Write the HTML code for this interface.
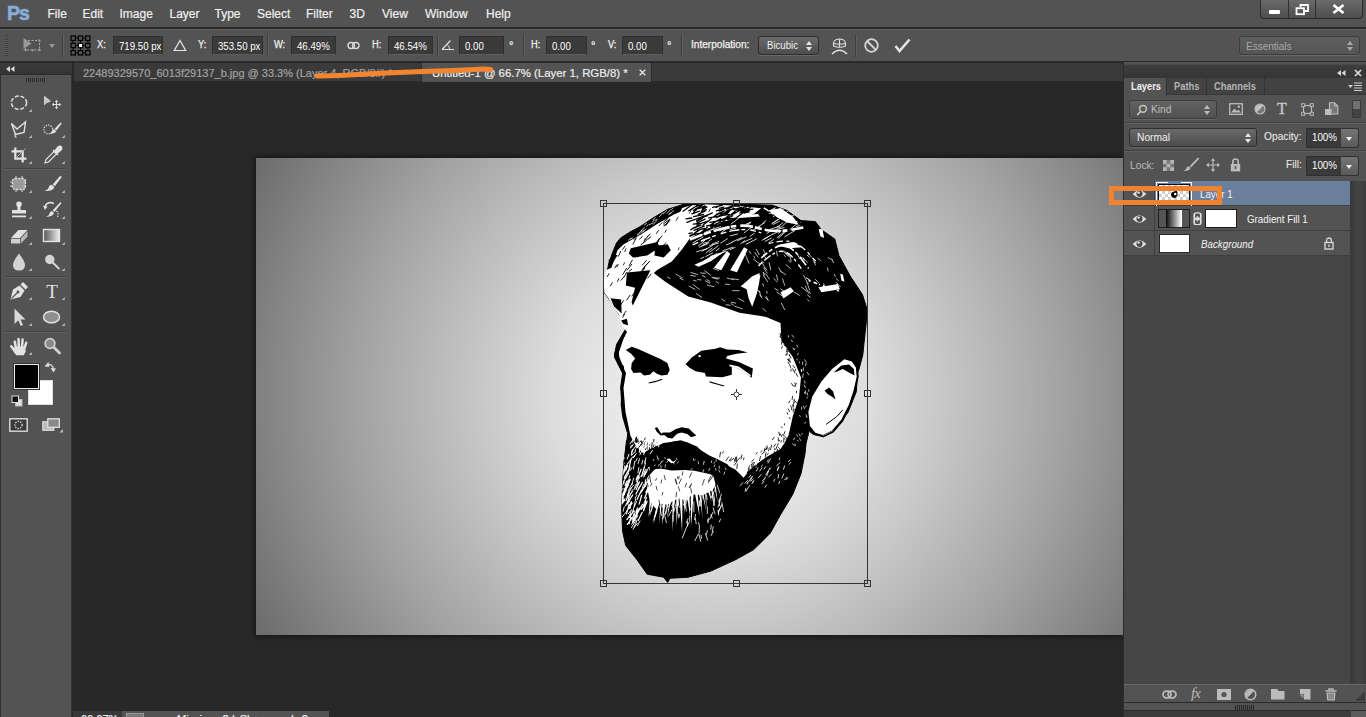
<!DOCTYPE html>
<html>
<head>
<meta charset="utf-8">
<title>Photoshop</title>
<style>
*{box-sizing:border-box;margin:0;padding:0}
html,body{width:1366px;height:717px;overflow:hidden;background:#282828;font-family:"Liberation Sans",sans-serif;color:#e6e6e6;font-size:11px}
.abs{position:absolute}
#menubar{position:absolute;left:0;top:0;width:1366px;height:28px;background:#535353;border-bottom:1px solid #2e2e2e}
#menubar .mi{position:absolute;top:7px;font-size:12px;-webkit-text-stroke:.2px #f0f0f0;color:#f0f0f0;white-space:nowrap}
#pslogo{position:absolute;left:7px;top:1px;font-size:21px;font-weight:bold;color:#86aed8;letter-spacing:-1.2px;transform:scaleX(.93);transform-origin:0 0;-webkit-text-stroke:.6px #86aed8}
#winctl{position:absolute;left:1260px;top:0;width:103px;height:19px;border:1px solid #2a2a2a;border-top:none;border-radius:0 0 4px 4px;background:linear-gradient(#6a6a6a,#4e4e4e);overflow:hidden}
#winctl div{position:absolute;top:0;height:19px;border-right:1px solid #2f2f2f}
#optbar{position:absolute;left:0;top:29px;width:1366px;height:33px;background:#535353;border-top:1px solid #636363;border-bottom:1px solid #2a2a2a}
.ol{position:absolute;top:9px;font-size:10px;-webkit-text-stroke:.25px #f0f0f0;transform:scaleX(.93);transform-origin:0 0;color:#f0f0f0;white-space:nowrap}
.of{position:absolute;top:6px;height:19px;background:#3a3a3a;border:1px solid #303030;border-bottom-color:#5e5e5e;font-size:10.5px;color:#fff;padding:3px 0 0 5px;white-space:nowrap;overflow:hidden}
.sep{position:absolute;top:5px;width:1px;height:22px;background:#3d3d3d;border-right:1px solid #616161;width:2px}
.dd{position:absolute;border:1px solid #2e2e2e;border-radius:3px;background:linear-gradient(#6a6a6a,#4c4c4c);font-size:11px;color:#f0f0f0;white-space:nowrap;box-shadow:0 1px 0 rgba(255,255,255,.12)}
.ud{position:absolute;width:7px;height:11px}
.ud:before{content:"";position:absolute;left:0;top:0;border:3.5px solid transparent;border-top:none;border-bottom:4px solid #e6e6e6}
.ud:after{content:"";position:absolute;left:0;top:6px;border:3.5px solid transparent;border-bottom:none;border-top:4px solid #e6e6e6}
#tabbar{position:absolute;left:74px;top:63px;width:1049px;height:19px;background:#3a3a3a;border-bottom:1px solid #2b2b2b}
.tab{position:absolute;top:0;height:19px;font-size:11px;white-space:nowrap;padding-top:4px;-webkit-text-stroke:.2px currentColor}
#toolhead{position:absolute;left:0;top:63px;width:72px;height:12px;background:linear-gradient(#3b3b3b,#343434);z-index:3;border-bottom:1px solid #2c2c2c}
#toolbox{position:absolute;left:0;top:73px;width:72px;height:644px;background:#535353;border-right:1px solid #333;box-shadow:inset 1px 0 #303030,inset 0 1px #686868}
.ti{position:absolute;overflow:visible}
#tgrip{position:absolute;left:26px;top:5px;width:20px;height:4px;background:repeating-linear-gradient(90deg,#2c2c2c 0 1px,transparent 1px 2px)}
.tsep{position:absolute;left:5px;width:61px;height:2px;background:#444;border-bottom:1px solid #606060}
#rhead{position:absolute;left:1px;top:2px;width:242px;height:14px;background:linear-gradient(#3d3d3d,#353535);border-top:1px solid #4a4a4a}
#rtabs{position:absolute;left:1px;top:16px;width:242px;height:17px;background:#424242;border-bottom:1px solid #383838}
.rt{position:absolute;top:0;height:17px;border-right:1px solid #333;font-size:10px;font-weight:bold;color:#b4b4b4;padding:3px 0 0 7px;white-space:nowrap}
.rt.act{background:#535353;color:#f2f2f2;height:18px}
.rt span,.s{display:inline-block;transform:scaleX(.93);transform-origin:0 0}
.hsep{position:absolute;left:1px;width:242px;height:2px;background:#434343;border-bottom:1px solid #5f5f5f}
.pl{position:absolute;font-size:11px;color:#f0f0f0;white-space:nowrap}
.pf{position:absolute;width:36px;height:20px;background:#3a3a3a;border:1px solid #303030;font-size:10.5px;color:#fff;padding:2px 0 0 5px;white-space:nowrap}
.pb{position:absolute;width:18px;height:20px;background:linear-gradient(#747474,#5a5a5a);border:1px solid #303030;border-left:none;border-radius:0 3px 3px 0}
.pb:after{content:"";position:absolute;left:5px;top:8px;border:3.5px solid transparent;border-top:4px solid #f0f0f0;border-bottom:none}
#llist{position:absolute;left:1px;top:119px;width:226px;height:503px;background:#464646}
.lr{position:absolute;left:0;width:226px;height:25px;background:#535353;border-bottom:1px solid #3f3f3f}
.lr.sel{background:#6a7f9c}
.ec{position:absolute;left:0;top:0;width:31px;height:24px;background:#535353;border-right:1px solid #3f3f3f}
.ln{position:absolute;top:6.8px;font-size:10.5px;color:#f4f4f4;white-space:nowrap}
#rscroll{position:absolute;left:227px;top:119px;width:16px;height:503px;background:linear-gradient(90deg,#393939,#434343 45%,#414141 80%,#383838)}
#rbot{position:absolute;left:1px;top:622px;width:242px;height:19px;background:#535353;border-top:1px solid #686868;border-bottom:1px solid #2c2c2c}
#rgrip{position:absolute;left:1px;top:641px;width:242px;height:8px;background:#535353;border-bottom:1px solid #2c2c2c}
#rfoot{position:absolute;left:1px;top:649px;width:242px;height:7px;background:#3c3c3c}
.s2{display:inline-block;transform:scaleX(.92);transform-origin:0 0}
.tt{display:inline-block;transform-origin:0 0}
#statusbar{position:absolute;left:73px;top:711px;width:256px;height:6px;background:#535353;overflow:hidden}
#orect{position:absolute;left:1109px;top:186px;width:113px;height:19px;border:5px solid #f08232;z-index:10}
#canvas{position:absolute;left:256px;top:158px;width:867px;height:477px;background:radial-gradient(circle at 455px 238px,#f0f0f0 0,#ebebeb 80px,#dcdcdc 160px,#c9c9c9 225px,#a3a3a3 351px,#848484 443px,#707070 500px,#5c5c5c 560px);box-shadow:0 0 6px 1px rgba(0,0,0,.55)}
#rpanel{position:absolute;left:1123px;top:62px;width:243px;height:655px;background:#535353}
</style>
</head>
<body>
<div id="menubar">
 <div id="pslogo">Ps</div>
 <div class="mi" style="left:47.5px">File</div>
 <div class="mi" style="left:82.5px">Edit</div>
 <div class="mi" style="left:119.5px">Image</div>
 <div class="mi" style="left:169.5px">Layer</div>
 <div class="mi" style="left:214.5px">Type</div>
 <div class="mi" style="left:257px">Select</div>
 <div class="mi" style="left:306px">Filter</div>
 <div class="mi" style="left:349.5px">3D</div>
 <div class="mi" style="left:382px">View</div>
 <div class="mi" style="left:425px">Window</div>
 <div class="mi" style="left:486px">Help</div>
 <div id="winctl"><div style="left:0;width:28px"></div><div style="left:28px;width:27px"></div>
<div style="position:absolute;left:8px;top:10px;width:11px;height:4px;background:#fff;border:none;border-radius:1px"></div>
<svg style="position:absolute;left:34px;top:4px" width="14" height="12" viewBox="0 0 14 12"><path d="M5.5 3 V1 H13 V7 H10" fill="none" stroke="#fff" stroke-width="1.8"/><rect x="1.5" y="4.2" width="7.5" height="6" fill="none" stroke="#fff" stroke-width="1.8"/></svg>
<svg style="position:absolute;left:71px;top:4px" width="13" height="10" viewBox="0 0 13 10"><path d="M1.5 1 L11.5 9 M11.5 1 L1.5 9" stroke="#fff" stroke-width="2.6"/></svg>
</div>
</div>
<div id="optbar">
 <div style="position:absolute;left:5px;top:5px;width:3px;height:21px;background:repeating-linear-gradient(#404040 0 1px,#5a5a5a 1px 2px)"></div>
 <svg style="position:absolute;left:22px;top:7px" width="20" height="17" viewBox="0 0 20 17"><path d="M1.5 1 L1.5 12 L9.5 6.5 Z" fill="#9a9a9a"/><path d="M6 3.5 H17.5 V13 H3.5 V10" fill="none" stroke="#a8a8a8" stroke-width="1" stroke-dasharray="2 1.5"/><rect x="2.5" y="12" width="2" height="2" fill="#a0a0a0"/><rect x="9.5" y="12.3" width="2" height="2" fill="#a0a0a0"/><rect x="16.5" y="12" width="2" height="2" fill="#a0a0a0"/><rect x="16.5" y="2.5" width="2" height="2" fill="#a0a0a0"/></svg>
 <div style="position:absolute;left:49px;top:14px;width:0;height:0;border:3.5px solid transparent;border-top:4px solid #9a9a9a"></div>
 <div class="sep" style="left:62px"></div>
 <svg style="position:absolute;left:70px;top:5px" width="21" height="21" viewBox="0 0 21 21"><path d="M3 3 H18 V18 H3 Z M10.5 3 V18 M3 10.5 H18" stroke="#000" stroke-width="1" fill="none"/><g fill="#535353" stroke="#000" stroke-width="1.2"><rect x="1" y="1" width="4.4" height="4.4"/><rect x="8.3" y="1" width="4.4" height="4.4"/><rect x="15.6" y="1" width="4.4" height="4.4"/><rect x="1" y="8.3" width="4.4" height="4.4"/><rect x="15.6" y="8.3" width="4.4" height="4.4"/><rect x="1" y="15.6" width="4.4" height="4.4"/><rect x="8.3" y="15.6" width="4.4" height="4.4"/><rect x="15.6" y="15.6" width="4.4" height="4.4"/></g><rect x="8.3" y="8.3" width="4.4" height="4.4" fill="#fff" stroke="#000" stroke-width="1.2"/></svg>
 <div class="ol" style="left:97px">X:</div>
 <div class="of" style="left:113px;width:50px"><span class="s2">719.50 px</span></div>
 <svg style="position:absolute;left:173px;top:9px" width="14" height="13" viewBox="0 0 14 13"><path d="M7 1.5 L12.7 11.5 H1.3 Z" fill="none" stroke="#e8e8e8" stroke-width="1.2"/></svg>
 <div class="ol" style="left:198px">Y:</div>
 <div class="of" style="left:212px;width:51px"><span class="s2">353.50 px</span></div>
 <div class="sep" style="left:267px"></div>
 <div class="ol" style="left:274px">W:</div>
 <div class="of" style="left:291px;width:45px"><span class="s2">46.49%</span></div>
 <svg style="position:absolute;left:347px;top:11px" width="13" height="9" viewBox="0 0 13 9"><rect x="1" y="1.5" width="6.5" height="6" rx="3" fill="none" stroke="#d8d8d8" stroke-width="1.4"/><rect x="5.5" y="1.5" width="6.5" height="6" rx="3" fill="none" stroke="#d8d8d8" stroke-width="1.4"/></svg>
 <div class="ol" style="left:372px">H:</div>
 <div class="of" style="left:388px;width:45px"><span class="s2">46.54%</span></div>
 <div class="sep" style="left:437px"></div>
 <svg style="position:absolute;left:441px;top:9px" width="14" height="12" viewBox="0 0 14 12"><path d="M1 10.5 H13 M1 10.5 L9.5 1.5" fill="none" stroke="#e0e0e0" stroke-width="1.2"/><path d="M8.5 10.5 A6 6 0 0 0 6.2 5.5" fill="none" stroke="#e0e0e0" stroke-width="1"/></svg>
 <div class="of" style="left:459px;width:45px"><span class="s2">0.00</span></div>
 <div class="ol" style="left:509px;top:9px;font-size:12px">°</div>
 <div class="sep" style="left:523px"></div>
 <div class="ol" style="left:531px">H:</div>
 <div class="of" style="left:546px;width:41px"><span class="s2">0.00</span></div>
 <div class="ol" style="left:591px;top:9px;font-size:12px">°</div>
 <div class="ol" style="left:608px">V:</div>
 <div class="of" style="left:622px;width:41px"><span class="s2">0.00</span></div>
 <div class="ol" style="left:667px;top:9px;font-size:12px">°</div>
 <div class="sep" style="left:681px"></div>
 <div class="ol" style="left:691px;transform:scaleX(1.01)">Interpolation:</div>
 <div class="dd" style="left:758px;top:6px;width:61px;height:19px"><span style="position:absolute;left:8px;top:2.5px;font-size:10px;transform:scaleX(.96);transform-origin:0 0">Bicubic</span><i class="ud" style="right:5px;top:4px"></i></div>
 <svg style="position:absolute;left:830px;top:7px" width="19" height="18" viewBox="0 0 19 18"><path d="M3.5 9 Q2.5 2 9.5 2 Q16.5 2 15.5 9 Q9.5 11.5 3.5 9 Z M9.5 2 V10.2 M3.2 6.3 Q9.5 8.3 15.8 6.3" fill="none" stroke="#e0e0e0" stroke-width="1.1"/><path d="M2 17 Q9.5 9.5 17 17" fill="none" stroke="#e0e0e0" stroke-width="1.5"/></svg>
 <div class="sep" style="left:855px"></div>
 <svg style="position:absolute;left:863px;top:7px" width="17" height="17" viewBox="0 0 17 17"><circle cx="8.5" cy="8.5" r="6.3" fill="none" stroke="#d6d6d6" stroke-width="1.8"/><path d="M4 4 L13 13" stroke="#d6d6d6" stroke-width="1.8"/></svg>
 <svg style="position:absolute;left:894px;top:8px" width="17" height="15" viewBox="0 0 17 15"><path d="M1.5 8 L5.5 13 L15.5 1.5" fill="none" stroke="#e4e4e4" stroke-width="2.6" stroke-linejoin="miter"/></svg>
 <div class="dd" style="left:1239px;top:6px;width:121px;height:19px;color:#a8a8a8;background:linear-gradient(#5e5e5e,#555);border-color:#3d3d3d"><span style="position:absolute;left:6px;top:2.5px;font-size:10.5px;transform:scaleX(.95);transform-origin:0 0">Essentials</span><i class="ud" style="right:5px;top:4px;opacity:.55"></i></div>
</div>
<div id="toolhead"><svg style="position:absolute;left:6px;top:3px" width="9" height="6" viewBox="0 0 9 6"><path d="M4 0 V6 L0 3 Z M8.5 0 V6 L4.5 3 Z" fill="#d8d8d8"/></svg></div>
<div id="toolbox">
<div id="tgrip"></div>
<svg class="ti" style="left:7px;top:18px" width="24" height="24" viewBox="0 0 24 24"><ellipse cx="12" cy="11.7" rx="7.6" ry="6.6" fill="none" stroke="#e2e2e2" stroke-width="1.5" stroke-dasharray="4 1.8"/><path d="M23 19 V22 H20 Z" fill="#bdbdbd" transform="translate(1.8,-1)"/></svg>
<svg class="ti" style="left:40px;top:18px" width="24" height="24" viewBox="0 0 24 24"><path d="M4 4.5 L4 14.5 L6.5 12.2 L11.2 10.3 Z" fill="#c8c8c8"/><path d="M16.5 10 V17 M13 13.5 H20" stroke="#e2e2e2" stroke-width="1.1"/><path d="M16.5 8.8 L18.2 11 H14.8 Z M16.5 18.2 L18.2 16 H14.8 Z M11.8 13.5 L14 11.8 V15.2 Z M21.2 13.5 L19 11.8 V15.2 Z" fill="#e2e2e2"/></svg>
<svg class="ti" style="left:7px;top:44px" width="24" height="24" viewBox="0 0 24 24"><path d="M4.5 6.5 L10 12 L18.5 5 L17 15.5 L8.5 17.5 Z" fill="none" stroke="#e2e2e2" stroke-width="1.4" stroke-linejoin="miter"/><path d="M8.5 17 Q7 19.5 9.5 20.5" fill="none" stroke="#e2e2e2" stroke-width="1.2"/><path d="M23 19 V22 H20 Z" fill="#bdbdbd" transform="translate(1.8,-1)"/></svg>
<svg class="ti" style="left:40px;top:44px" width="24" height="24" viewBox="0 0 24 24"><circle cx="8.3" cy="12.5" r="4.4" fill="none" stroke="#e2e2e2" stroke-width="1.3" stroke-dasharray="1.2 1.3"/><path d="M14.5 12 L20.5 5.5 L21.7 6.6 L16.5 13.5 Z" fill="#e2e2e2"/><path d="M14 12.3 L16.2 14 Q15 17 9.5 16.6 Q12 15.5 12.3 14 Q12.8 12.3 14 12.3 Z" fill="#e2e2e2"/><path d="M23 19 V22 H20 Z" fill="#bdbdbd" transform="translate(1.8,-1)"/></svg>
<svg class="ti" style="left:7px;top:70px" width="24" height="24" viewBox="0 0 24 24"><path d="M8.3 4.5 V15.7 H19.5 M4.5 8.3 H15.7 V19.5" fill="none" stroke="#e2e2e2" stroke-width="2.2"/><path d="M9.5 14.5 L18.5 5.5" stroke="#b0b0b0" stroke-width="1"/><path d="M23 19 V22 H20 Z" fill="#bdbdbd" transform="translate(1.8,-1)"/></svg>
<svg class="ti" style="left:40px;top:70px" width="24" height="24" viewBox="0 0 24 24"><path d="M5 20 L6 16.5 L14 8.5 L16.5 11 L8.5 19 Z" fill="none" stroke="#e2e2e2" stroke-width="1.2"/><path d="M13 7 L18 12 M14.5 8.5 L18 4 Q20 2.5 21.5 4 Q22.5 5.5 21 7 L17 10.5 Z" fill="#e2e2e2" stroke="#e2e2e2" stroke-width="1.3"/><path d="M23 19 V22 H20 Z" fill="#bdbdbd" transform="translate(1.8,-1)"/></svg>
<svg class="ti" style="left:7px;top:99px" width="24" height="24" viewBox="0 0 24 24"><rect x="5.5" y="6.5" width="13" height="11" rx="2.5" fill="#9a9a9a" stroke="#e2e2e2" stroke-width="1.3" stroke-dasharray="2 1.3"/><path d="M9 4 V20 M15 4 V20 M3 10 H21 M3 14 H21" stroke="#e2e2e2" stroke-width="1" stroke-dasharray="2.5 11"/><path d="M23 19 V22 H20 Z" fill="#bdbdbd" transform="translate(1.8,-1)"/></svg>
<svg class="ti" style="left:40px;top:99px" width="24" height="24" viewBox="0 0 24 24"><path d="M20.3 3.8 L21.8 5 L14.8 14.3 L12.6 12.4 Z" fill="#e2e2e2"/><path d="M12 12.9 L14.3 15 Q13.5 19.5 4.5 19 Q8.2 17.8 8.6 15.5 Q9.3 12.6 12 12.9 Z" fill="#e2e2e2"/><path d="M23 19 V22 H20 Z" fill="#bdbdbd" transform="translate(1.8,-1)"/></svg>
<svg class="ti" style="left:7px;top:125px" width="24" height="24" viewBox="0 0 24 24"><path d="M9.5 4.5 Q12 2.5 14.5 4.5 Q15.5 6.5 13.5 9 V12 H19 V15.5 H5 V12 H10.5 V9 Q8.5 6.5 9.5 4.5 Z" fill="#e2e2e2"/><rect x="5" y="17.5" width="14" height="1.8" fill="#e2e2e2"/><path d="M23 19 V22 H20 Z" fill="#bdbdbd" transform="translate(1.8,-1)"/></svg>
<svg class="ti" style="left:40px;top:125px" width="24" height="24" viewBox="0 0 24 24"><path d="M20.5 4 L21.5 5 L14.5 14 L12.8 12.3 Z" fill="#e2e2e2"/><path d="M12.3 13.2 L14 15 Q12.5 19 6 18.7 Q9.5 17.5 9.5 15.3 Q10.3 13 12.3 13.2 Z" fill="#e2e2e2"/><path d="M5 9 Q6 4.5 11 4.5 L14 5.5" fill="none" stroke="#e2e2e2" stroke-width="1.5"/><path d="M3 7.5 L7.5 8.5 L5 12 Z" fill="#e2e2e2"/><path d="M16.5 13 Q19.5 15.5 17 19.5" fill="none" stroke="#e2e2e2" stroke-width="1.2" stroke-dasharray="1.3 1.3"/><path d="M23 19 V22 H20 Z" fill="#bdbdbd" transform="translate(1.8,-1)"/></svg>
<svg class="ti" style="left:7px;top:151px" width="24" height="24" viewBox="0 0 24 24"><path d="M4 14 L11.5 6 H20.5 L13 14 Z" fill="#e2e2e2"/><path d="M4 14.8 H13 V19.5 H4 Z" fill="#d0d0d0"/><path d="M13.8 14.5 L20.5 7.3 V12.5 L13.8 19.5 Z" fill="#b8b8b8"/><path d="M23 19 V22 H20 Z" fill="#bdbdbd" transform="translate(1.8,-1)"/></svg>
<svg class="ti" style="left:40px;top:151px" width="24" height="24" viewBox="0 0 24 24"><defs><linearGradient id="gt" x1="0" x2="1"><stop offset="0" stop-color="#555"/><stop offset="1" stop-color="#f0f0f0"/></linearGradient></defs><rect x="3.5" y="5.5" width="16" height="12" fill="url(#gt)" stroke="#e2e2e2" stroke-width="1.4"/><path d="M23 19 V22 H20 Z" fill="#bdbdbd" transform="translate(1.8,-1)"/></svg>
<svg class="ti" style="left:7px;top:177px" width="24" height="24" viewBox="0 0 24 24"><path d="M12 3.5 Q18 11.5 18 15 Q18 20.5 12 20.5 Q6 20.5 6 15 Q6 11.5 12 3.5 Z" fill="#d4d4d4"/><path d="M23 19 V22 H20 Z" fill="#bdbdbd" transform="translate(1.8,-1)"/></svg>
<svg class="ti" style="left:40px;top:177px" width="24" height="24" viewBox="0 0 24 24"><circle cx="9.8" cy="9.5" r="4.7" fill="#d4d4d4"/><path d="M13 12.7 L18.8 18.5" stroke="#d4d4d4" stroke-width="2" stroke-linecap="round"/><path d="M23 19 V22 H20 Z" fill="#bdbdbd" transform="translate(1.8,-1)"/></svg>
<svg class="ti" style="left:7px;top:206px" width="24" height="24" viewBox="0 0 24 24"><path d="M3.5 20.5 L6 10.5 L12.5 6.5 L17.5 11.5 L13.5 18 Z" fill="#e2e2e2"/><path d="M4.5 19.5 L10.5 13.5" stroke="#535353" stroke-width="1.1"/><circle cx="11" cy="13" r="1.4" fill="#535353"/><path d="M13.5 5.5 L16 3 L21 8 L18.5 10.5 Z" fill="#e2e2e2"/><path d="M23 19 V22 H20 Z" fill="#bdbdbd" transform="translate(1.8,-1)"/></svg>
<svg class="ti" style="left:40px;top:206px" width="24" height="24" viewBox="0 0 24 24"><text x="12" y="18.5" font-family="Liberation Serif" font-size="19" text-anchor="middle" fill="#e2e2e2">T</text><path d="M23 19 V22 H20 Z" fill="#bdbdbd" transform="translate(1.8,-1)"/></svg>
<svg class="ti" style="left:7px;top:232px" width="24" height="24" viewBox="0 0 24 24"><path d="M7.5 3.5 V19 L11.3 15.3 L13.8 21 L16 20 L13.6 14.5 H18.5 Z" fill="#d8d8d8"/><path d="M23 19 V22 H20 Z" fill="#bdbdbd" transform="translate(1.8,-1)"/></svg>
<svg class="ti" style="left:40px;top:232px" width="24" height="24" viewBox="0 0 24 24"><ellipse cx="11.5" cy="12" rx="8" ry="5.8" fill="#8f8f8f" stroke="#e2e2e2" stroke-width="1.5"/><path d="M23 19 V22 H20 Z" fill="#bdbdbd" transform="translate(1.8,-1)"/></svg>
<svg class="ti" style="left:7px;top:261px" width="24" height="24" viewBox="0 0 24 24"><g stroke="#e2e2e2" stroke-width="2.5" stroke-linecap="round" fill="none"><path d="M9.1 14.4 L7.7 7.6 M11.9 13.2 L11.5 5 M15 13.2 L15.6 5.5 M17.4 14.4 L19.2 8.8 M8.4 18 L4.3 12.3"/></g><path d="M7.7 12.5 L18 12.5 L18.7 17.5 L16.7 21.3 L9.1 21.3 L6.5 16.8 Z" fill="#e2e2e2"/><path d="M23 19 V22 H20 Z" fill="#bdbdbd" transform="translate(1.8,-1)"/></svg>
<svg class="ti" style="left:40px;top:261px" width="24" height="24" viewBox="0 0 24 24"><circle cx="10" cy="9.5" r="4.8" fill="#888" stroke="#d0d0d0" stroke-width="1.8"/><path d="M13.8 13.3 L19.5 19" stroke="#d0d0d0" stroke-width="2.8" stroke-linecap="round"/></svg>
<div class="tsep" style="top:95px"></div><div class="tsep" style="top:203px"></div><div class="tsep" style="top:258px"></div>
<svg class="ti" style="left:44px;top:288px" width="13" height="12" viewBox="0 0 13 12"><path d="M3 4 Q8 2 9.5 8" fill="none" stroke="#d8d8d8" stroke-width="1.4"/><path d="M0.5 5.5 L4.5 0.8 L5.2 6 Z M6.5 7 L12 7.5 L9.5 11.5 Z" fill="#d8d8d8"/></svg>
<div style="position:absolute;left:28px;top:307px;width:25px;height:25px;background:#fff;border:1px solid #ddd"></div>
<div style="position:absolute;left:14px;top:291px;width:25px;height:25px;background:#000;border:1px solid #e8e8e8;outline:1px solid #333"></div>
<svg class="ti" style="left:11px;top:322px" width="12" height="12" viewBox="0 0 12 12"><rect x="4.5" y="4.5" width="6.5" height="6.5" fill="#e0e0e0" stroke="#bbb"/><rect x="1" y="1" width="6.5" height="6.5" fill="#111" stroke="#ddd"/></svg>
<svg class="ti" style="left:9px;top:345px" width="19" height="14" viewBox="0 0 19 14"><rect x=".8" y=".8" width="17.4" height="12.4" fill="#3a3a3a" stroke="#dcdcdc" stroke-width="1.4"/><circle cx="9.5" cy="7" r="3.6" fill="none" stroke="#e8e8e8" stroke-width="1.2" stroke-dasharray="1.4 1.2"/></svg>
<svg class="ti" style="left:42px;top:345px" width="22" height="16" viewBox="0 0 22 16"><rect x=".8" y="3.8" width="11" height="8.5" fill="#bbb" stroke="#ddd" stroke-width="1.2"/><rect x="5.8" y=".8" width="11.5" height="8.5" fill="#888" stroke="#e0e0e0" stroke-width="1.3"/><path d="M21 11 V14.5 H17.5 Z" fill="#bdbdbd"/></svg>
</div>
<div id="tabbar">
 <div class="tab" style="left:9px;color:#a2a2a2"><span class="tt">22489329570_6013f29137_b.jpg @ 33.3% (Layer 4, RGB/8#) *</span></div>
 <div class="tab" style="left:347px;width:231px;background:#535353;color:#ececec;padding-left:10px;border-left:1px solid #2e2e2e;border-right:1px solid #2e2e2e"><span class="tt" style="transform:scaleX(1.035)">Untitled-1 @ 66.7% (Layer 1, RGB/8) *</span>
 <svg style="position:absolute;left:217px;top:6px" width="7" height="7" viewBox="0 0 7 7"><path d="M.7 .7 L6.3 6.3 M6.3 .7 L.7 6.3" stroke="#e4e4e4" stroke-width="1.3"/></svg></div>
</div>
<div id="statusbar"><div style="position:absolute;left:0;top:0;width:49px;height:6px;background:#383838"></div><span style="position:absolute;left:8px;top:1.5px;font-size:11px;color:#f4f4f4;-webkit-text-stroke:.2px #fff">66.67%</span><div style="position:absolute;left:53px;top:2px;width:18px;height:6px;background:#7a7a7a;border:1px solid #999"></div><span style="position:absolute;left:104px;top:1.5px;font-size:11px;color:#f4f4f4;white-space:nowrap;-webkit-text-stroke:.2px #fff;word-spacing:2px">Missing: 2d Sharpened: 2 seconds</span></div>
<div id="canvas"></div>
<!--FACE--><svg id="face" style="position:absolute;left:596px;top:196px" width="280" height="394" viewBox="596 196 280 394"><clipPath id="sc"><path d="M604.2 292.3 L606 278 L608.3 265.7 L612 254 L616.5 243 L620.6 238 L630 232 L640 226.7 L653 218 L667.7 209.3 L684 204.2 L706.7 203.8 L739.5 204.2 L772.3 205.2 L786.6 210.3 L801 220.6 L815.3 221.6 L821.5 229.8 L834.8 239 L838.9 255.4 L850.1 275.9 L862.4 294.4 L867.6 310.8 L864 343 L862.8 355 L859 369 L857.5 373.3 L856.3 391.7 L848.1 412.2 L835.8 428.6 L821.5 435.8 L813.3 434.4 L809.2 431 L806.1 443 L805.1 453.2 L801 473.7 L792.8 494.2 L780.5 514.7 L770.2 533.2 L753.8 549.6 L735.4 559.8 L710.8 571.1 L688.2 577.2 L669.8 578.3 L667.7 582.4 L663.6 577.2 L647.2 574.2 L637 559.8 L625.7 545.5 L622.6 531.1 L621.6 508.6 L622.6 484 L623.7 463.5 L626.7 443 L627.8 432.7 L622.6 412.2 L620.6 387.6 L622.6 373.3 L614.4 356.9 L616.5 344.6 L626.7 327.2 L620.6 316.9 L611.4 302.6 Z"/></clipPath>
<path d="M604.2 292.3 L606 278 L608.3 265.7 L612 254 L616.5 243 L620.6 238 L630 232 L640 226.7 L653 218 L667.7 209.3 L684 204.2 L706.7 203.8 L739.5 204.2 L772.3 205.2 L786.6 210.3 L801 220.6 L815.3 221.6 L821.5 229.8 L834.8 239 L838.9 255.4 L850.1 275.9 L862.4 294.4 L867.6 310.8 L864 343 L862.8 355 L859 369 L857.5 373.3 L856.3 391.7 L848.1 412.2 L835.8 428.6 L821.5 435.8 L813.3 434.4 L809.2 431 L806.1 443 L805.1 453.2 L801 473.7 L792.8 494.2 L780.5 514.7 L770.2 533.2 L753.8 549.6 L735.4 559.8 L710.8 571.1 L688.2 577.2 L669.8 578.3 L667.7 582.4 L663.6 577.2 L647.2 574.2 L637 559.8 L625.7 545.5 L622.6 531.1 L621.6 508.6 L622.6 484 L623.7 463.5 L626.7 443 L627.8 432.7 L622.6 412.2 L620.6 387.6 L622.6 373.3 L614.4 356.9 L616.5 344.6 L626.7 327.2 L620.6 316.9 L611.4 302.6 Z" fill="#000" stroke="#000" stroke-width="1" stroke-linejoin="round"/>
<path d="M611.4 267.7 L617.5 250.3 L623.7 244.2 L640.1 234.9 L657.5 223.7 L673.9 214.4 L688.2 208.3 L706.7 205.8 L727.2 208.7 L719.0 214.4 L702.6 222.6 L692.3 234.9 L682.1 249.3 L671.8 261.6 L657.5 269.8 L653.8 272.9 L665.7 282.1 L688.2 296.4 L710.8 302.6 L739.5 312.8 L766.1 316.9 L780.5 323.1 L781.5 340.5 L792.8 356.9 L801 377.4 L798.9 397.9 L792.8 416.3 L788.7 434.8 L784.6 443 L780.5 449.1 L766.1 457.3 L751.8 467.6 L743.6 477.8 L735.4 469.6 L719 461.4 L702.6 451.2 L688.2 443 L678 440.9 L663.6 443 L650 449 L643.1 453.2 L636 446 L630.5 436 L625.5 412 L623.5 388 L626 373 L618 357 L620 345 L627 332 L621.5 325.3 L619 314.7 L613 306.5 L608.4 298.3 L604.3 292.5 L603.7 282 L606 270.2 Z" fill="#fff"/>
<path d="M844.4 359.2 L832.1 369.1 L821.4 381.4 L812.2 396.7 L808.4 412.1 L809.9 425.9 L815.3 432.8 L822.9 435.1 L832.1 430.5 L841.3 419.8 L849.0 404.4 L853.6 390.6 L856.7 376.8 L855.9 367.6 L852.1 361.5 Z" fill="#fff"/>
<path d="M647.2 477.8 L655.4 468.6 L678.0 469.6 L694.4 470.7 L712.8 474.8 L716.9 481.9 L712.8 490.1 L702.6 495.3 L692.3 494.2 L686.2 500.4 L678.0 498.3 L667.7 504.5 L659.5 503.5 L655.4 508.6 L649.7 500.4 L647.2 488.1 Z" fill="#fff"/>
<path d="M625.8 350.0 L631.7 346.7 L638.1 349.1 L648.7 353.7 L660.4 359.0 L667.4 363.1 L669.7 370.1 L667.4 374.8 L661.5 375.4 L656.9 373.7 L653.3 371.3 L649.8 374.8 L644.0 375.4 L640.5 372.5 L633.4 373.1 L631.1 369.0 L631.7 363.1 L635.2 358.4 L631.1 353.7 Z" fill="#000"/>
<path d="M648.7 383.0 L655.7 381.4 L662.1 379.3" stroke="#000" stroke-width="1.1" fill="none"/>
<path d="M685.5 364.3 L692.0 357.3 L701.4 350.8 L715.4 348.8 L720.1 347.3 L727.1 349.6 L738.8 350.0 L747.6 352.6 L736.5 353.7 L727.1 356.1 L726.0 358.4 L738.8 361.9 L752.9 368.4 L751.7 377.8 L744.7 372.5 L736.5 367.8 L731.8 366.6 L731.8 374.8 L722.4 377.2 L706.0 376.6 L704.9 373.1 L695.5 371.3 L689.6 367.8 Z" fill="#000"/>
<path d="M729.5 364.5 L738.8 366.4 L751.1 375.2 L750.0 376.2 L737.7 368.6 L729.5 366.2 Z" fill="#fff"/>
<circle cx="699.6" cy="356.1" r="1.2" fill="#fff"/>
<path d="M709.6 381.9 L717.8 384.2 L724.2 386.0" stroke="#000" stroke-width="1.1" fill="none"/>
<path d="M624.6 335.0 L617.6 344.4 L614.9 353.7 L617.7 360.8 L623.1 366.6 L623.6 373.7 L622.2 384.2 L621.5 405.0 L623.1 417.0 L627.6 432.2" stroke="#000" stroke-width="1.6" fill="none" stroke-linejoin="round"/>
<path d="M624.6 335.0 L621.7 339.7 L617.3 346.7 L614.7 353.7 L617.3 360.2 L622.9 366.0 L624.1 370.1 L621.7 363.1 L619.4 357.3 L618.8 352.6 L621.1 346.1 Z" fill="#000"/>
<path d="M654.8 427.9 L657.2 427.3 L661.3 433.7 L663.0 432.6 L670.1 432.6 L675.9 429.1 L681.8 427.3 L688.8 428.5 L692.9 432.6 L696.4 435.5 L691.1 437.3 L687.6 434.3 L681.8 432.6 L677.1 433.7 L672.4 438.4 L667.7 437.8 L664.2 434.9 L660.7 435.5 L656.6 431.4 Z" fill="#000"/>
<path d="M844.4 358.1 L852.1 360.2 L857.1 367.3 L857.9 376.8 L854.8 390.9 L850.2 405.0 L842.6 420.7 L833.1 431.7 L823.3 436.6 L814.7 434.2 L809.1 426.8" stroke="#000" stroke-width="1.6" fill="none" stroke-linejoin="round"/>
<path d="M833.7 372.5 L841.3 365.5 L849.0 364.5 L853.9 369.1 L854.5 375.6 L849.3 372.8 L842.9 369.1 L837.1 371.6 Z" fill="#000"/>
<path d="M824.5 390.6 L829.1 387.5 L833.1 391.5 L835.5 399.5 L832.1 396.7 L827.5 394.0 Z" fill="#000"/>
<path d="M826.0 424.4 L836.7 416.7 L842.9 409.8" stroke="#000" stroke-width="1" fill="none"/>
<path d="M641.9 464.2 L653.7 450.1 L665.4 444.3 L671.2 441.9 L680.6 440.2 L687.6 442.5 L697.0 446.6 L704.0 453.7 L715.7 458.3 L727.4 464.2 L734.5 473.6 L739.2 485.0 L715.7 485.0 L713.4 475.9 L706.4 471.2 L697.0 470.1 L685.3 470.1 L671.2 470.6 L659.5 468.3 L652.5 470.1 L646.6 475.9 L644.3 485.0 L638.4 485.0 L637.3 473.6 Z" fill="#000"/>
<path d="M626.1 439.6 L632.6 447.8 L636.7 456.0 L641.9 464.2 L638.4 485.0 L623.2 485.0 L623.8 461.9 L625.0 450.1 Z" fill="#000"/>
<path d="M666.5 458.9 L669.5 458.6 L673.0 461.9 L677.1 459.3 L674.2 462.8 L671.2 463.3 Z" fill="#fff"/>
<path d="M682.1 207.9 L690.0 205.5 L704.5 204.2 L733.5 205.5 L761.2 208.2 L753.2 214.5 L742.7 217.1 L729.5 219.8 L716.4 225.0 L703.2 230.6 L690.0 238.5 L684.7 239.5 L687.4 226.4 L678.1 217.1 Z" fill="#fff"/>
<path d="M713.9 267.7 L727.2 250.9 L730.2 253.8 L721.4 270.2 Z" fill="#fff"/>
<path d="M730.2 270.2 L744.0 247.2 L747.7 249.3 L737.0 272.2 Z" fill="#fff"/>
<path d="M694.4 264.7 L710.8 257.5 L727.2 249.7 L710.8 261.2 L698.5 266.7 Z" fill="#fff"/>
<path d="M740.5 286.2 L751.8 278.0 L760.4 274.9 L758.9 284.1 L756.9 293.4 L752.2 306.7 L748.7 298.5 L746.6 289.3 Z" fill="#fff"/>
<path d="M737.4 215.5 L757.9 214.0 L760.0 216.5 L739.5 218.1 Z" fill="#fff"/>
<path d="M768.2 210.3 L780.5 208.3 L792.8 216.5 L798.9 224.7 L786.6 222.6 L776.4 216.5 Z" fill="#fff"/>
<path d="M776.4 245.2 L792.8 242.1 L803.0 247.2 L788.7 248.3 Z" fill="#fff"/>
<path d="M819.0 228.8 L822.5 229.8 L823.9 238.0 L820.4 236.0 Z" fill="#fff"/>
<path d="M780.5 292.3 L790.7 287.2 L793.8 291.3 L783.5 298.5 Z" fill="#fff"/>
<path d="M818.4 287.2 L837.9 284.1 L839.9 289.3 L821.5 292.3 Z" fill="#fff"/>
<path d="M630.8 248.3 L657.5 242.1 L659.5 247.2 L647.2 255.4 L632.9 257.5 L628.8 253.4 Z" fill="#000"/>
<path d="M655.4 246.2 L667.7 244.2 L670.8 250.3 L663.6 257.5 L654.4 255.4 Z" fill="#000"/>
<path d="M626.9 272.6 L650.4 270.2 L638.7 293.7 L632.8 305.4 L631.6 301.9 L635.1 287.8 L625.8 285.5 Z" fill="#000"/>
<path d="M610.5 298.3 L621.1 299.5 L621.7 313.6 L614.1 306.5 Z" fill="#000"/>
<path d="M621.1 320.6 L626.9 318.8 L628.1 325.3 L623.4 324.1 Z" fill="#000"/>
<path d="M608.8 259.7 L615.2 255.0 L617.6 255.0 L611.7 264.4 L608.2 269.1 Z" fill="#000"/><g clip-path="url(#sc)"><path d="M631.6 458.9l-1.7 3.0M637.4 475.6l-1.2 5.9M623.6 480.9l-0.7 3.5M634.4 511.5l-1.0 4.2M640.0 520.9l-2.5 4.8M646.4 469.7l-0.9 3.6M631.1 510.7l-1.7 6.3M640.3 476.1l-1.5 3.0M624.3 463.1l-2.8 4.8M631.3 492.7l-1.9 4.4M644.6 501.6l-1.9 6.2M637.1 515.3l-2.5 4.0M634.2 506.1l-1.5 5.7M623.7 499.2l-3.5 5.4M646.9 471.5l-3.4 5.6M638.7 482.6l-5.0 7.1M635.7 498.8l-1.5 7.1M645.4 469.3l-2.6 6.5M623.2 483.1l-1.0 3.6M624.2 506.9l-1.1 4.4M633.4 515.0l-1.2 5.6M637.8 515.9l-4.6 6.7M630.3 479.5l-2.9 7.8M627.5 465.2l-1.7 5.7M638.9 467.6l-1.0 5.4M632.8 491.2l-4.5 5.6M636.9 495.2l-1.7 2.9M633.5 478.2l-1.5 6.6M624.3 452.3l-1.1 3.8M632.0 451.2l-0.7 3.8M625.4 475.4l-1.5 8.1M639.6 458.7l-1.5 4.8M632.7 456.7l-5.2 7.3M635.5 484.8l-0.8 3.5M632.1 467.7l-2.3 3.3M637.2 458.5l-1.4 2.8M637.2 523.3l-4.2 5.8M629.8 475.7l-2.0 7.4M637.4 507.8l-1.5 4.1M645.3 504.7l-1.8 5.8M632.4 449.4l-0.9 4.6M629.8 501.0l-3.6 4.4M649.1 475.5l-1.2 4.2M628.0 463.0l-4.0 7.4M645.9 484.5l-3.9 6.8M624.9 498.6l-4.7 6.1M643.4 484.3l-2.0 7.5M631.8 509.5l-3.4 4.2M642.7 460.3l-0.9 3.8M626.6 511.5l-4.4 5.4M632.3 489.8l-0.7 3.0M637.2 519.8l-3.2 7.6M645.5 463.5l-1.4 4.5M629.3 492.8l-1.7 5.3M632.4 482.8l-3.9 7.5M634.3 518.6l-2.6 5.6M634.8 461.4l-1.4 7.7M627.4 484.0l-3.3 5.4M631.6 487.5l-3.5 6.9M625.5 490.7l-1.4 4.4M644.0 486.7l-3.4 6.7M647.9 481.6l-2.9 5.3M636.8 501.1l-2.5 5.7M635.8 520.4l-4.3 7.1M648.7 467.3l-3.9 7.7M645.9 457.8l-1.3 5.5M624.6 465.8l-1.5 6.9M626.9 502.9l-1.9 3.3M633.6 485.1l-5.1 6.2M627.1 480.7l-2.2 4.5" stroke="#fff" stroke-width="0.9" fill="none" stroke-linecap="round"/>
<path d="M633.9 440.7l-0.9 1.3M647.1 442.9l-0.0 2.7M649.7 444.2l-0.3 4.9M630.6 439.7l-0.1 4.2M636.7 437.2l-1.7 4.4M647.8 447.7l-0.1 1.7M652.1 442.6l-0.3 4.8M650.1 449.5l-0.3 4.5M643.4 441.0l-2.2 4.2M636.6 437.2l-1.0 2.1M630.7 437.8l-0.1 2.2M638.2 440.4l-1.5 2.0M645.2 438.1l-0.5 1.5M653.8 444.9l-0.5 3.1M656.9 442.8l-1.9 4.0M641.2 444.1l-2.8 4.1M639.3 450.1l-2.2 3.0M641.6 441.2l-0.1 2.0M636.1 437.8l-0.3 4.4M637.1 439.3l-0.8 3.0M632.5 443.0l-1.1 4.7M638.1 441.4l-0.0 2.8M644.2 444.1l-0.6 3.2M630.0 442.2l-0.1 1.6M637.9 439.1l-1.6 2.9M654.4 446.9l-2.7 3.7M641.1 440.8l-1.5 1.3M653.4 446.6l-0.2 4.4M631.8 444.4l-1.9 4.0M651.9 447.6l-0.3 1.6M631.6 441.4l-0.4 4.4M647.3 446.4l-2.0 3.3M645.3 444.6l-0.9 1.5M653.9 439.4l-0.2 2.4M644.9 441.8l-1.6 3.6" stroke="#000" stroke-width="0.9" fill="none" stroke-linecap="round"/>
<path d="M708.8 518.1l-0.7 3.5M659.9 498.0l-1.5 4.9M653.1 498.9l-1.8 7.6M701.6 500.1l-0.6 6.2M685.1 490.6l-1.8 4.0M683.8 498.9l1.6 9.5M664.9 516.2l1.5 6.5M713.0 512.1l-3.3 7.2M683.9 500.7l1.2 5.3M714.5 490.6l-3.5 7.2M719.4 500.0l0.1 5.7M676.8 507.7l0.4 3.3M668.0 498.7l-0.4 4.3M698.1 534.5l-3.1 6.1M705.1 486.7l-1.8 5.9M707.7 519.6l0.3 3.3M685.6 503.0l0.7 8.1M700.1 500.6l-0.8 5.7M661.5 492.9l1.6 9.2M687.5 496.2l-4.3 9.0M683.8 491.7l0.7 3.6M667.2 498.3l-1.4 9.1M707.4 506.8l-0.1 6.7M678.0 502.7l1.4 4.7M688.0 518.8l-1.8 4.1M669.7 497.7l0.0 6.1M717.2 485.2l2.5 7.6M719.0 510.2l-0.5 3.0M713.4 531.3l-2.3 4.2M689.5 521.7l-3.7 7.2M699.4 526.3l-0.3 6.9M699.2 500.8l1.1 4.6M698.5 522.6l0.9 3.4M689.7 516.2l0.0 4.6M672.1 509.5l-3.5 6.6M718.0 510.3l0.7 4.7M687.6 521.3l-0.1 4.8M701.0 535.2l0.5 3.2M675.0 507.3l-1.1 4.3M711.2 524.9l-0.4 4.4M713.0 496.8l1.3 8.2M687.4 494.4l0.9 5.8M659.8 505.8l1.6 9.7M653.0 505.8l-3.9 8.3M721.8 502.2l1.8 9.4M707.2 485.8l-1.3 5.5M677.8 502.3l0.6 3.0M670.4 503.4l-1.8 3.4M713.2 507.9l1.9 6.0M663.5 504.1l-1.3 2.9M708.8 486.2l1.1 3.3M720.9 498.2l-2.8 8.9M675.1 499.1l-3.4 6.5M673.3 499.2l2.8 7.8M720.6 519.1l-1.4 2.8M666.8 510.3l-4.5 8.6M678.8 497.9l-0.2 6.5M721.5 494.1l-2.8 7.7M713.2 526.7l-1.0 5.2M673.5 504.0l-1.2 3.4M655.9 511.6l-1.6 5.9M666.8 507.1l-1.5 7.6M707.3 530.8l-0.9 3.7M714.6 500.2l-0.8 5.6M706.5 495.0l0.6 4.7M693.9 502.0l0.0 9.9M688.3 496.8l-2.6 7.1M685.8 529.3l-3.5 8.7M651.5 500.2l1.0 4.2M721.7 504.6l-2.4 5.6M695.3 518.3l0.9 5.5M659.5 495.3l0.9 7.1M699.7 495.3l1.8 5.0M701.8 494.2l0.3 4.4M711.0 514.3l1.1 3.6M679.5 514.4l-0.8 3.6M680.6 499.7l0.8 9.6M672.9 515.3l0.2 5.9M677.0 494.9l-1.2 4.2M684.7 493.0l2.3 6.5M698.8 534.3l2.0 7.1M677.6 511.9l1.1 4.9M656.9 511.1l-3.4 9.2M721.4 505.5l-3.1 6.6M713.4 492.9l-1.5 4.3M713.7 494.1l0.9 5.7M689.2 505.2l1.1 4.6M705.5 533.6l2.1 6.6M708.1 486.1l-1.4 3.5M695.6 514.4l-1.0 5.0" stroke="#fff" stroke-width="0.8" fill="none" stroke-linecap="round"/>
<path d="M676.5 492.3l-0.4 4.6M678.3 486.7l1.4 4.2M681.3 478.8l-2.2 4.6M679.1 476.6l-0.4 2.4M656.2 486.4l0.9 3.6M691.6 472.8l-2.1 4.7M682.9 471.7l-0.6 3.5M713.5 474.9l-3.1 5.1M711.0 476.0l-2.6 5.1M651.8 483.3l-1.1 2.4M709.7 480.3l-1.2 2.3M661.7 479.9l-0.6 3.2M649.8 476.7l1.0 5.7M659.0 500.2l0.9 4.0M691.6 483.6l-2.3 3.6M691.1 485.0l-1.4 2.7M716.2 492.1l-0.1 5.1M678.0 476.5l-0.9 2.0M704.3 479.5l-1.9 5.6M688.0 495.5l0.0 2.0M649.6 475.4l-1.1 3.6M656.4 478.5l-0.7 2.0M647.4 483.4l0.8 3.3M662.8 492.4l-0.7 2.7M690.7 488.1l1.2 5.6M664.2 475.4l1.1 4.4M675.2 479.9l1.5 4.3M686.4 483.3l-1.2 3.6M664.5 504.8l1.2 3.9M675.5 478.9l1.5 4.9" stroke="#000" stroke-width="0.7" fill="none" stroke-linecap="round"/>
<path d="M692.0 468.5l-0.8 1.1M672.9 461.5l1.2 2.5M718.6 470.0l1.3 2.3M714.9 464.8l-0.9 1.7M664.9 457.5l0.2 1.1M711.7 460.8l-0.5 1.8M719.1 466.0l0.3 2.3M668.2 460.1l-1.4 2.5M715.0 462.0l-1.1 1.3M703.9 469.5l-1.2 2.7M698.1 461.6l0.5 2.2M657.0 455.9l1.0 2.7M676.3 458.2l0.5 1.0M709.9 468.3l-1.1 2.2M649.4 467.4l0.0 2.6M653.4 459.5l0.4 1.0M724.8 471.9l-0.9 2.5M704.0 461.2l0.4 1.1M716.1 459.5l0.1 1.8M645.1 460.6l0.3 2.4M678.6 461.9l-1.5 1.4M725.2 468.0l0.8 1.6M695.0 459.7l-0.7 0.9M722.1 458.8l0.7 1.2M660.9 465.4l0.1 2.7M670.5 459.7l-0.9 1.8M703.6 462.6l-0.1 1.8M663.0 460.7l-1.3 1.5M665.6 464.7l-0.5 2.4M715.7 468.5l0.1 1.7M659.4 464.3l-1.1 1.8M655.3 464.8l-1.0 1.1M661.6 461.5l-1.2 2.4M658.0 458.5l0.3 1.6M693.4 458.6l0.1 1.4" stroke="#fff" stroke-width="0.7" fill="none" stroke-linecap="round"/>
<path d="M745.8 488.5l-0.7 2.8M784.6 465.8l-1.1 3.6M764.0 481.1l-2.0 2.6M778.4 467.0l-1.0 3.5M764.4 479.0l-2.2 2.1M774.8 479.3l-1.0 2.1M787.1 477.2l-2.7 2.8M779.0 466.6l-1.4 3.4M787.6 477.8l-1.4 1.9M765.6 466.7l-1.7 2.4M750.8 475.2l-1.9 2.2M749.4 480.7l-2.5 2.2M745.7 471.8l-2.1 3.4M771.0 474.6l-2.3 2.4M752.4 476.5l-1.8 3.8M747.0 489.4l-0.7 1.5M756.4 464.3l-0.5 2.9M765.4 477.1l-1.0 2.2M753.3 479.0l-2.5 2.3M753.0 481.6l-1.0 2.0M747.5 480.5l-2.5 2.7M768.4 471.3l-1.6 4.6M761.2 474.6l-3.0 3.2M768.3 459.8l-1.0 1.6M790.8 462.4l-1.7 1.8M758.1 467.7l-1.7 3.3M780.0 462.7l-3.3 3.1M743.0 482.7l-3.1 2.9M748.1 482.8l-0.9 1.3M779.8 457.9l-0.5 1.9M753.9 480.5l-0.8 1.9M749.8 485.4l-2.4 3.5M751.6 476.9l-2.1 3.5M766.5 485.1l-1.3 2.1M769.7 468.5l-2.4 3.9M768.3 471.3l-2.6 3.6M762.6 465.1l-1.3 1.2M778.7 474.5l-0.7 3.6M770.9 467.9l-1.2 1.1M783.7 474.0l-1.8 4.1M762.0 467.5l-2.2 3.6M752.5 465.8l-1.6 3.1M790.3 459.7l-2.0 2.1M770.5 458.8l-2.5 4.2M779.8 481.2l-1.0 2.4" stroke="#fff" stroke-width="0.8" fill="none" stroke-linecap="round"/>
<path d="M731.7 457.6l-2.5 3.4M756.7 465.5l-2.8 2.3M753.8 459.2l-2.3 2.8M757.3 452.6l-1.3 1.4M754.6 462.4l-2.2 4.2M736.4 457.2l-1.8 3.4M736.1 459.9l-1.8 2.4M733.9 458.4l-3.6 2.6M737.1 461.4l-2.7 3.8M767.1 445.8l-0.2 2.4M740.2 457.6l-3.3 3.2M749.4 465.8l-1.1 4.0M775.7 443.9l-2.2 3.2M766.0 452.7l-0.7 4.3M751.2 469.7l-2.5 2.2M744.0 457.7l-0.5 2.1M736.1 456.8l-1.4 3.0M765.1 451.4l-3.3 2.6M749.6 468.7l-2.3 4.3M774.2 437.3l-1.7 2.4M728.7 456.8l-2.9 3.9M752.0 464.3l-0.5 2.6M720.5 452.2l-0.8 4.7M768.2 453.4l-1.2 1.6M760.5 456.3l-1.0 4.4M769.3 447.8l-0.7 3.1M767.0 448.1l-0.3 1.5M723.8 451.7l-1.7 1.4M753.5 462.3l-2.5 2.5M761.9 450.7l-1.1 1.3M767.3 447.8l-3.3 3.1M771.6 445.2l-1.1 4.3M736.7 457.9l-0.3 3.3M741.9 454.9l-0.8 3.9M737.4 464.0l-0.6 4.5M778.2 443.5l-0.5 1.8M752.0 468.3l-0.8 3.4M765.0 448.0l-0.8 2.6M748.6 470.8l-1.4 1.9M777.1 446.0l-1.3 3.5" stroke="#000" stroke-width="0.8" fill="none" stroke-linecap="round"/>
<path d="M784.1 344.8l0.9 1.1M793.1 409.1l0.2 2.9M794.1 385.4l1.5 1.5M781.3 426.6l1.1 1.3M792.6 396.3l-0.5 3.2M790.9 405.8l0.7 3.8M789.7 364.9l0.9 2.5M795.5 369.2l-1.1 3.4M783.9 437.8l1.2 1.6M783.4 339.5l-1.1 2.9M794.6 382.8l1.1 1.5M780.4 433.9l1.3 2.8M793.2 405.8l-0.1 1.6M783.7 438.8l0.1 3.4M791.1 369.1l-0.3 2.0M777.5 449.4l-0.5 1.8M789.5 355.0l1.5 3.3M782.6 434.6l0.8 1.3M780.2 333.2l2.2 2.7M781.4 440.7l-0.4 1.4M774.4 456.7l0.3 1.7M781.6 342.4l-0.2 1.8M786.3 353.7l-0.5 1.3M779.8 336.1l2.1 2.9M789.0 358.7l-0.6 2.0M786.9 349.4l2.4 2.8M787.2 349.1l-0.8 2.6M789.5 359.6l0.8 2.9M793.6 408.8l1.3 1.2M774.4 451.6l-0.2 1.2M796.3 383.2l-1.3 2.8M789.2 417.5l0.9 1.5M796.0 373.1l1.6 3.3M778.1 437.8l0.4 3.3M781.5 339.9l1.0 2.2M787.6 359.1l0.7 1.2M793.1 365.4l1.7 2.4M792.7 368.7l0.9 2.5M779.2 440.0l0.6 1.0M791.6 383.4l1.4 2.7M788.3 409.0l1.2 2.4M796.5 391.1l-0.1 1.9M778.4 447.5l1.2 1.1M794.6 400.5l2.4 2.7M780.3 334.3l0.9 3.5M784.6 423.7l-0.2 1.3M794.1 402.6l-1.4 3.3M784.5 436.0l2.5 2.9M788.3 359.6l1.3 1.9M793.1 405.1l0.7 0.8M794.2 399.2l-0.3 3.4M782.3 346.2l-0.7 2.1M774.6 448.7l0.1 1.1M788.1 362.1l1.2 2.2M784.9 431.6l-1.1 3.1M787.0 412.6l0.7 1.7M789.8 400.9l-0.9 1.8M778.8 432.1l1.0 3.5M789.1 354.5l0.5 1.5M787.4 351.5l-0.6 3.8" stroke="#000" stroke-width="0.8" fill="none" stroke-linecap="round"/>
<path d="M793.0 348.0l1.2 1.7M806.1 405.8l-0.6 1.3M799.3 361.8l0.2 1.0M807.4 397.1l-0.5 1.0M799.7 415.4l0.5 1.1M804.6 380.9l0.3 2.2M802.8 361.9l-0.3 2.5M803.7 367.8l-0.6 2.9M797.5 440.3l0.6 0.8M803.6 373.9l-0.7 1.3M798.3 353.2l-0.7 1.6M788.6 335.6l-0.3 1.5M808.8 389.6l-0.0 1.7M804.3 385.1l1.1 2.6M794.7 437.8l-1.0 2.0M803.3 406.1l1.3 2.7M806.0 363.0l-0.5 2.6M796.5 434.6l1.4 1.9M798.8 433.7l1.5 2.3M791.9 335.1l1.9 2.2M802.2 433.5l-0.5 0.9M797.0 358.9l0.3 1.2M796.9 345.2l0.7 1.9M807.2 372.4l1.6 2.5M806.3 416.3l0.6 1.2M791.1 340.2l1.5 1.4M801.5 407.3l0.2 2.1M806.1 414.7l0.5 1.6M794.9 444.0l0.6 1.7M794.7 348.7l-0.5 0.9M799.6 438.6l1.1 1.9M805.3 422.3l-0.4 1.0M801.7 369.5l-0.1 2.1M792.4 443.8l1.9 1.6M805.6 390.9l0.1 3.0M802.9 375.8l-0.2 1.8M801.3 369.3l-0.0 2.1M807.4 393.0l0.3 2.0M804.6 359.7l1.6 2.1M804.4 392.2l0.3 1.1" stroke="#fff" stroke-width="0.7" fill="none" stroke-linecap="round"/>
<path d="M655.1 244.1l4.1 -5.4M659.1 225.7l2.9 -3.0M624.8 251.6l1.2 -2.8M656.6 233.4l1.8 -2.9M663.7 222.1l4.9 -5.2M639.6 239.1l2.7 -2.6M637.5 256.4l3.1 -2.7M636.1 252.1l2.5 -1.9M635.3 257.4l1.3 -2.1M658.9 239.8l3.1 -3.9M640.8 244.9l3.5 -2.9M641.5 271.3l2.9 -4.0M643.9 267.2l4.5 -4.6M654.2 250.6l4.9 -4.5M617.1 266.8l1.0 -2.3M658.7 251.2l2.3 -5.6M656.1 246.2l2.3 -5.7M638.1 252.4l5.7 -3.9M666.0 225.4l2.7 -4.3M643.8 242.3l1.4 -3.6M665.1 232.3l1.1 -2.1M645.4 239.5l2.9 -4.0M648.3 239.0l2.4 -2.1M645.2 241.6l2.6 -3.0M629.2 265.5l3.2 -5.4M640.4 274.0l4.3 -5.9M665.5 220.9l2.0 -2.3M661.6 247.1l4.2 -4.3M664.0 225.5l2.6 -1.9M637.9 257.0l3.6 -6.5M615.0 267.9l1.7 -2.9M648.2 236.1l1.9 -2.2M664.1 225.8l5.9 -5.2M635.8 255.9l2.5 -4.7M657.2 242.9l1.9 -1.9M663.4 224.0l6.4 -4.8M658.5 247.0l2.1 -1.5M642.2 269.6l3.5 -3.9M629.1 271.4l2.6 -2.1M633.6 274.6l1.6 -1.7M632.9 244.2l3.1 -5.7M623.4 264.9l1.2 -2.1M646.3 265.0l3.2 -3.6M618.4 256.3l2.3 -5.0M634.1 239.5l2.1 -2.2M622.8 274.4l3.7 -6.0M666.5 223.7l3.2 -4.1M622.5 249.4l2.6 -3.3M627.2 270.1l4.5 -5.8M642.4 265.1l4.0 -4.7" stroke="#000" stroke-width="0.9" fill="none" stroke-linecap="round"/>
<path d="M678.2 249.8l0.9 -2.0M696.6 224.4l1.2 -1.2M700.4 221.2l2.1 -2.7M708.8 211.7l1.4 -2.7M722.2 208.9l1.9 -1.7M689.5 213.2l1.5 -3.0M706.8 216.7l0.9 -1.6M676.2 220.4l2.0 -3.4" stroke="#000" stroke-width="0.8" fill="none" stroke-linecap="round"/>
<path d="M629.9 295.3l-3.1 4.7M617.3 302.3l-3.0 4.2M624.0 276.7l-3.0 3.6M641.9 275.2l-3.3 4.7M634.9 291.8l-2.9 4.2M651.0 274.1l-3.2 4.0M618.8 278.7l-1.2 2.7M626.0 311.1l-2.6 3.9M626.6 272.5l-2.6 4.6M623.6 300.7l-3.0 4.2M609.0 273.8l-2.1 3.0M635.6 293.0l-1.0 2.7M624.3 314.5l-1.5 2.8M612.3 282.7l-1.9 3.2" stroke="#000" stroke-width="0.9" fill="none" stroke-linecap="round"/>
<path d="M698.2 246.1l7.8 -6.9M710.3 257.5l10.0 -4.6M730.2 235.9l7.3 -1.9M781.2 217.3l2.7 -1.4M704.6 260.6l9.0 -5.0M713.4 227.8l6.1 -5.1M784.9 236.7l9.7 -6.0M693.0 242.8l10.1 -5.8M726.4 244.9l5.8 -2.6M764.0 239.1l8.5 -4.8M771.8 210.2l3.5 -2.3M701.0 240.8l3.1 -1.5M730.0 249.6l5.1 -2.2M773.2 224.4l6.1 -3.0M776.9 227.5l6.0 -4.8M786.7 217.3l4.2 -1.6M718.9 229.5l11.3 -2.8M706.0 225.4l4.6 -1.2M721.6 232.5l4.1 -3.4M730.2 229.6l5.2 -1.3M707.9 258.6l9.2 -5.2M772.6 234.3l8.1 -4.0M772.1 223.5l9.5 -6.0M746.0 224.2l4.9 -2.2M774.3 210.6l7.7 -2.5M715.1 221.8l6.0 -5.2M774.7 230.1l9.4 -2.5M724.0 230.0l5.8 -2.0M705.8 256.5l6.8 -3.5M762.2 240.3l7.0 -4.2M716.1 255.0l10.0 -3.5M701.8 245.4l7.0 -2.6M699.4 247.2l7.9 -3.2M716.0 220.1l3.1 -2.3M777.9 228.2l3.4 -1.4M782.1 226.3l6.3 -5.9M757.7 227.1l6.8 -4.4M709.6 252.2l8.5 -6.3M778.6 238.0l7.4 -6.7M752.5 230.4l7.4 -3.8M710.6 256.3l10.0 -2.3M796.5 226.5l3.5 -0.8M740.0 215.7l8.0 -4.5M766.9 233.4l4.0 -2.5M731.2 223.9l7.7 -5.8M744.4 232.6l7.4 -5.6M707.1 223.0l8.4 -4.1M768.5 243.1l5.1 -3.6M703.2 243.3l5.6 -1.3M778.1 233.5l3.0 -2.5M702.1 251.3l10.4 -5.8M750.0 236.4l4.2 -3.1M769.7 229.5l10.0 -3.4M709.1 240.7l2.6 -1.6M740.7 243.7l4.2 -3.1M790.0 229.5l6.4 -5.3M737.5 240.7l8.6 -3.8M768.8 211.3l5.8 -3.2M712.1 244.2l6.7 -2.7M700.7 258.6l3.2 -1.5M710.8 230.0l9.8 -3.5M709.8 245.5l8.4 -2.3M791.6 222.8l2.5 -2.0M772.6 214.0l9.1 -2.2M706.0 252.9l6.0 -4.7M696.5 251.8l10.8 -3.2M742.8 242.6l9.2 -4.3M747.9 224.4l2.6 -1.6M737.6 215.1l4.5 -1.9M783.3 213.9l4.9 -3.0M773.2 216.5l10.7 -5.0M765.0 241.4l6.3 -3.3M731.7 242.1l10.3 -4.5M705.1 260.4l8.1 -4.6M713.6 224.9l5.0 -3.2M772.1 223.5l5.5 -3.9M722.5 250.9l10.4 -3.7M777.0 237.7l8.0 -6.7M720.8 243.0l6.6 -4.2M746.2 244.2l10.2 -5.2M704.7 232.5l8.5 -3.5M713.1 222.5l6.8 -6.2M708.6 222.7l8.5 -2.1M697.3 235.6l8.9 -2.2M716.1 250.8l3.1 -2.4M719.5 230.9l6.5 -2.7M769.2 213.5l5.9 -1.6M781.4 210.0l4.8 -1.6M762.5 223.7l3.5 -3.2M789.9 217.0l7.6 -3.3" stroke="#fff" stroke-width="0.8" fill="none" stroke-linecap="round"/>
<path d="M807.3 255.3l2.1 1.6M806.4 281.7l1.8 1.6M776.8 292.0l5.4 4.0M765.3 267.9l1.5 2.2M764.9 297.0l3.1 3.0M817.9 258.3l2.6 2.1M778.9 267.8l2.3 4.3M807.5 299.7l1.6 1.4M784.4 250.9l3.8 5.0M749.1 251.1l1.8 2.5M763.2 272.9l1.9 1.4M776.5 274.9l1.2 5.2M746.8 258.2l2.1 5.0M836.2 278.6l2.2 2.0M828.1 257.5l3.0 2.0M834.2 274.3l1.0 2.2M785.9 264.6l4.6 3.9M776.5 251.2l0.9 4.8M806.4 277.9l4.1 2.5M815.4 279.5l3.7 3.3M801.5 287.2l5.4 4.1M827.4 268.0l0.8 3.0M762.8 283.6l0.6 2.4M784.5 252.6l5.0 4.1M780.7 289.1l6.6 3.9M763.4 275.4l4.3 6.3M803.2 257.7l1.0 3.0M762.7 308.2l3.1 3.2M774.7 288.4l3.6 2.2M765.9 273.8l3.3 5.3M753.6 259.4l6.3 4.6M754.8 252.4l3.1 4.6M763.5 254.4l2.4 4.1M781.4 303.2l3.2 6.4M769.2 262.7l1.5 7.1M782.6 278.9l2.1 6.5M806.5 277.8l2.8 2.0M807.0 282.8l2.5 6.9M798.0 255.4l1.5 3.2M763.7 267.9l3.4 5.0M803.5 275.0l3.0 6.1M809.0 291.1l1.4 2.7M763.4 272.3l0.7 3.2M831.8 258.8l1.6 3.8M807.5 295.0l2.7 2.0M761.5 261.1l2.4 1.5M781.1 271.6l4.6 3.1M836.1 282.2l4.2 4.6M784.3 255.0l1.2 1.7M808.8 254.0l5.2 5.8M805.3 286.1l3.3 7.1M759.6 295.0l2.5 2.5M823.7 283.8l2.2 6.9M799.9 256.5l4.5 2.7M813.9 261.5l1.7 1.1M757.3 290.2l2.9 1.7M766.7 291.2l0.4 2.1M773.9 278.5l3.1 3.2M788.6 260.6l2.1 1.4M756.2 249.3l3.0 5.4M766.5 296.7l1.6 3.7M789.9 255.9l1.3 5.2M744.8 253.5l1.8 3.9M813.0 258.6l2.3 6.4M759.1 291.0l2.3 6.3M763.2 249.4l2.4 4.8M753.7 256.1l1.4 2.3M804.5 259.4l3.3 3.1M794.1 292.1l5.4 3.3M762.2 262.8l2.9 5.4" stroke="#fff" stroke-width="0.7" fill="none" stroke-linecap="round"/>
<path d="M680.0 278.3l3.2 1.6M676.2 274.3l6.0 3.6M727.1 278.2l6.2 1.4M704.7 270.7l5.8 4.4M700.5 272.9l5.0 0.4M705.3 280.7l4.5 2.5M702.3 275.5l3.0 1.5M689.1 286.1l5.8 3.2M693.3 284.7l6.1 4.6M713.1 268.6l5.5 1.8M713.1 277.8l6.5 0.3M725.3 284.2l4.4 0.3M667.7 277.2l2.4 1.4M697.7 279.6l3.4 0.3M734.9 306.3l7.3 2.5M711.9 277.2l6.0 2.0M690.7 275.3l4.7 0.9M732.0 278.8l6.4 0.8M690.9 272.5l6.6 2.0M732.6 290.7l6.6 0.0M731.5 302.3l4.1 0.8M693.6 280.3l2.6 0.7M696.4 293.6l5.3 3.8M721.8 299.2l3.0 1.9M716.1 281.6l2.3 1.5M706.7 279.5l3.4 2.2M731.1 303.6l2.3 1.6M738.7 298.7l5.3 2.7M707.4 285.1l6.5 1.6M726.2 304.7l4.0 0.6" stroke="#fff" stroke-width="0.7" fill="none" stroke-linecap="round"/>
<path d="M701.8 207.6l2.8 -1.7M745.1 212.0l2.7 -2.3M740.7 211.0l5.9 -2.9M706.6 225.9l7.1 -1.4M727.4 207.8l9.7 -3.9M723.1 220.8l9.6 -5.1M734.7 211.3l5.4 -3.1M692.0 235.6l6.2 -5.5M716.1 207.4l9.5 -4.2M699.7 229.7l4.8 -1.2M716.4 217.3l10.8 -3.4M698.1 214.6l8.2 -5.0M696.9 223.0l8.2 -3.8M745.0 210.5l7.8 -1.4M726.4 209.1l9.6 -3.5M715.6 224.9l4.6 -3.0M715.3 221.8l3.4 -1.7M700.9 213.0l4.2 -1.9M698.1 224.3l9.3 -2.9M693.3 220.0l11.3 -4.1M701.5 211.0l5.3 -4.0M731.0 214.6l4.0 -3.0M688.8 210.8l6.4 -4.0M696.6 220.7l10.5 -5.4M719.4 211.0l4.0 -1.6M695.5 206.7l11.1 -3.6M714.0 216.3l5.5 -2.9M736.7 217.6l8.5 -6.6M710.1 225.8l6.5 -1.1M716.3 214.4l8.2 -3.5M693.6 216.7l9.9 -2.2M725.6 218.0l3.2 -2.4M720.0 221.2l9.6 -5.5M709.8 222.4l8.6 -1.5M719.8 215.6l7.4 -4.1M744.3 213.1l5.6 -3.2M724.7 213.7l8.9 -5.4M694.8 227.9l3.5 -3.2M693.7 212.0l4.1 -3.5M716.4 210.8l10.3 -3.0M712.6 207.4l9.6 -2.0M691.0 209.8l6.8 -5.0M716.5 217.6l4.2 -2.8M737.9 210.2l3.5 -2.6M686.8 222.4l3.1 -1.0M727.6 219.7l8.2 -1.6M708.8 217.8l10.6 -1.7M693.4 210.2l8.0 -4.5M730.8 215.1l4.7 -2.7M702.8 225.2l8.5 -6.5M720.8 213.6l3.7 -0.6M693.9 230.3l10.3 -4.2M728.5 218.9l3.7 -0.6M743.6 207.7l3.4 -2.2M739.6 213.0l8.5 -2.5M689.8 221.1l4.7 -1.4M733.9 213.7l9.8 -5.6M715.9 223.8l9.5 -2.4M719.5 208.3l4.1 -1.2M740.7 208.7l6.0 -2.2M701.8 232.2l5.4 -4.9M689.0 233.4l3.3 -0.6M718.8 220.3l9.1 -2.8M696.8 208.9l4.0 -1.0M696.8 221.4l3.8 -2.3M744.3 212.8l4.9 -0.9M689.9 235.5l8.9 -2.2M741.0 212.2l9.3 -4.6M694.8 227.7l6.1 -2.6M695.4 208.9l6.7 -3.3M703.3 216.8l9.1 -3.9M728.7 209.8l6.2 -1.2M693.2 224.2l6.4 -0.9M725.4 215.0l3.6 -3.2M691.9 213.9l7.6 -2.8M710.6 224.9l9.9 -6.2M725.9 211.3l3.7 -1.7M686.0 218.8l5.8 -0.8M683.1 211.2l8.4 -6.2M690.1 236.2l9.1 -6.0M722.9 215.3l6.6 -0.9M690.8 229.8l3.6 -2.4M710.9 226.9l11.8 -1.8M733.8 209.7l7.6 -2.3M702.3 209.1l3.5 -2.6" stroke="#000" stroke-width="1.3" fill="none" stroke-linecap="round"/>
<path d="M646.8 226.4l1.3 -1.8M668.7 214.6l2.6 -1.5M669.2 213.9l4.4 -3.1M649.3 224.8l3.9 -2.0M663.2 213.9l3.5 -3.2M671.5 209.6l1.6 -1.6M642.7 232.3l3.5 -3.4M630.5 239.2l2.1 -1.4M644.3 225.1l2.3 -1.8M652.6 221.5l2.2 -1.6M653.0 219.8l2.5 -2.6M667.2 213.3l3.4 -3.8M628.2 240.4l2.7 -2.4M641.7 231.7l2.2 -1.6M659.4 216.7l3.6 -4.1M641.3 230.3l3.2 -2.4M637.7 235.5l4.5 -3.9M655.4 220.3l2.1 -1.2M637.1 234.6l4.5 -4.0M653.0 224.5l3.9 -3.8" stroke="#fff" stroke-width="0.7" fill="none" stroke-linecap="round"/></g><g clip-path="url(#sc)"><path d="M690.0 239.5 Q716.4 229.0 730.8 226.7 Q745.3 224.4 754.5 227.2 Q763.8 230.0 773.0 230.8 Q782.2 231.6 792.8 229.5 L803.3 227.4" stroke="#fff" stroke-width="2.6" fill="none" stroke-dasharray="13 2 7 3 16 2 5 4"/>
<path d="M692.6 244.8 Q717.7 233.6 731.5 230.9 Q745.3 228.3 753.2 230.6 L761.2 232.9" stroke="#fff" stroke-width="1.4" fill="none" stroke-dasharray="6 3 10 2 4 5"/>
<path d="M761.2 258.0 Q774.3 246.1 782.2 245.4 Q790.1 244.8 799.4 256.6 L808.6 268.5" stroke="#fff" stroke-width="1.6" fill="none" stroke-dasharray="8 2 4 3 10 3"/>
<path d="M758.5 265.9 Q771.7 252.7 779.6 251.4 Q787.5 250.1 795.4 260.6 L803.3 271.2" stroke="#fff" stroke-width="1.4" fill="none" stroke-dasharray="5 3 8 2 3 4"/>
<path d="M769.1 243.5 Q784.9 239.5 792.8 242.2 Q800.7 244.8 808.6 253.3 L816.5 261.9" stroke="#fff" stroke-width="1.2" fill="none" stroke-dasharray="4 3 7 3 3 5"/>
<path d="M763.8 207.9 Q774.3 214.5 778.2 217.2 Q782.2 219.8 791.5 221.1 L800.7 222.4" stroke="#fff" stroke-width="1.4" fill="none" stroke-dasharray="5 3 3 3 8 4"/>
<path d="M808.6 280.4 Q821.8 285.7 830.3 288.3 L838.9 290.9" stroke="#fff" stroke-width="1.6" fill="none" stroke-dasharray="2 3 4 2 1 3"/>
<path d="M743.4 284.3 L751.9 276.4 L759.8 273.1 L758.5 281.7 L755.9 290.9 L751.9 294.0 L750.0 287.0 Z" fill="#fff"/>
<path d="M818.9 229.6 L822.4 228.3 L823.7 237.6 L820.5 236.2 Z" fill="#fff"/>
<path d="M840.2 273.8 L842.9 274.4 L844.4 281.7 L841.5 280.4 Z" fill="#fff"/></g><g clip-path="url(#sc)"><path d="M649.7 499.4 L651.9 499.4 L648.6 517.2 Z M653.2 499.4 L655.4 499.4 L649.5 517.6 Z M656.8 503.5 L659.2 503.5 L653.3 524.4 Z M660.3 502.4 L661.9 502.4 L659.3 523.5 Z M662.6 501.7 L665.6 501.7 L662.4 524.9 Z M667.1 500.4 L668.8 500.4 L666.3 515.0 Z M669.5 499.7 L671.2 499.7 L666.9 519.2 Z M672.5 498.8 L674.7 498.8 L672.5 531.2 Z M676.2 497.6 L678.5 497.6 L676.5 526.2 Z M679.5 496.7 L682.5 496.7 L682.1 532.4 Z M684.2 495.3 L686.1 495.3 L684.5 514.5 Z M686.8 494.5 L689.5 494.5 L690.2 517.4 Z M690.7 493.3 L693.7 493.3 L691.2 525.9 Z M694.6 492.1 L697.6 492.1 L699.6 516.6 Z M698.7 490.9 L700.3 490.9 L702.7 518.8 Z M701.3 490.1 L702.9 490.1 L706.3 511.6 Z M704.6 489.1 L706.2 489.1 L706.5 508.8 Z M706.9 488.4 L709.6 488.4 L711.5 501.4 Z M710.9 487.2 L712.6 487.2 L713.7 507.3 Z M714.2 486.2 L715.8 486.2 L717.7 502.3 Z" fill="#fff"/><path d="M630.8 517.0l-1.6 6.6M645.8 500.0l-2.0 10.7M628.4 473.3l-3.1 5.5M630.6 460.4l-1.5 7.9M629.2 497.2l-2.3 6.8M648.6 489.0l-4.1 9.2M627.6 466.0l-5.4 8.1M629.4 468.5l-5.1 9.3M646.5 497.4l-1.6 4.4M629.1 504.4l-2.6 9.4M638.8 475.8l-2.0 8.8M624.5 471.2l-4.0 9.1M639.2 474.8l-3.0 4.5M623.0 474.1l-1.5 4.1M627.4 481.0l-2.0 4.5M632.4 517.4l-5.0 7.0M641.3 496.0l-0.9 4.2M623.2 499.6l-3.3 8.5M624.6 493.4l-4.9 9.0M642.6 504.3l-5.2 9.0M632.1 503.1l-5.5 8.4M633.9 510.4l-4.3 6.8M639.5 481.9l-3.4 7.5M624.8 499.9l-5.9 8.2M642.3 482.4l-3.9 7.1M634.5 513.7l-1.7 9.1M623.4 497.2l-2.1 5.2M641.5 490.0l-4.4 9.4M630.8 502.6l-1.2 5.0M647.1 501.3l-3.6 9.6M631.5 501.7l-1.6 6.8M646.5 482.1l-2.6 5.7M626.3 489.9l-5.2 8.5M630.1 467.1l-2.1 5.5M628.4 484.2l-3.2 6.7M631.1 513.8l-4.2 5.8M624.6 457.5l-2.3 3.6M641.8 495.1l-2.7 9.1M645.1 471.8l-0.9 4.2M639.7 486.4l-3.7 7.7M641.1 469.2l-1.9 4.9M622.9 488.2l-2.5 4.6M630.0 479.4l-3.5 6.8M639.3 508.0l-3.1 9.0M626.1 486.9l-4.5 9.4M632.8 494.9l-5.2 8.1M648.2 487.6l-2.4 4.9M642.2 512.3l-4.0 8.1M637.2 510.4l-3.0 9.9M645.8 479.6l-1.3 7.0M637.5 508.8l-1.5 3.9M644.3 467.4l-2.8 9.1M626.4 465.7l-3.5 8.4M645.4 503.3l-4.2 6.1M628.6 492.0l-2.5 8.7" stroke="#fff" stroke-width="1.2" fill="none" stroke-linecap="round"/><path d="M650.3 445.5l-2.5 3.4M638.2 442.6l-3.3 4.5M634.4 452.2l-2.7 3.1M647.8 438.9l-1.6 3.7M641.5 451.2l-1.6 3.6M646.6 443.3l-3.7 4.3M636.6 444.5l-0.5 3.7M644.3 441.3l-0.8 4.4M633.9 439.5l-1.6 2.9M639.8 447.5l-0.5 4.9M631.2 445.3l-0.6 2.7M646.3 443.8l-1.1 3.5M634.2 447.7l-1.9 3.7M660.0 441.3l-1.4 5.5M634.7 455.3l-1.5 2.0M635.5 449.7l-0.5 2.3M657.4 443.4l-1.4 2.1M641.6 448.8l-0.1 2.8M645.4 450.3l-1.8 4.4M633.7 436.2l-0.2 2.1M647.1 445.4l-1.1 2.3M633.5 439.0l-3.5 4.8M629.0 454.3l-1.8 4.7M638.8 444.4l-1.4 3.4M633.4 444.1l-1.9 3.1M633.9 438.2l-0.8 1.9M649.9 443.1l-1.8 3.6M636.2 453.5l-2.7 4.3M656.8 443.1l-3.4 4.4M652.3 450.5l-2.0 3.1" stroke="#fff" stroke-width="1.0" fill="none" stroke-linecap="round"/></g></svg><!--/FACE-->
<svg id="tbox" style="position:absolute;left:596px;top:196px" width="280" height="394" viewBox="596 196 280 394">
<rect x="603.5" y="203.5" width="264" height="380" fill="none" stroke="#333" stroke-width="1"/>
<g fill="none" stroke="#333" stroke-width="1"><rect x="600.5" y="200.5" width="6" height="6"/><rect x="733.5" y="200.5" width="6" height="6"/><rect x="864.5" y="200.5" width="6" height="6"/><rect x="600.5" y="390.5" width="6" height="6"/><rect x="864.5" y="390.5" width="6" height="6"/><rect x="600.5" y="580.5" width="6" height="6"/><rect x="733.5" y="580.5" width="6" height="6"/><rect x="864.5" y="580.5" width="6" height="6"/></g>
<g stroke="#333" stroke-width="1" fill="none"><circle cx="736.5" cy="394.5" r="2.5"/><path d="M736.5 389 V392 M736.5 397 V400 M731 394.5 H734 M739 394.5 H742"/></g>
</svg>
<div id="orect"></div>
<svg id="oline" style="position:absolute;left:310px;top:62px" width="190" height="20" viewBox="310 62 190 20"><path d="M317 76 L330 75.7 Q345 75.5 361 74.3 L392 72.8 L423 71.6 L454 70.4 L484 69.1 L490.5 69.4" fill="none" stroke="#f38531" stroke-width="5" stroke-linecap="round"/></svg>
<div id="rpanel">
<div style="position:absolute;left:0;top:0;width:1px;height:655px;background:#2c2c2c"></div>
<div id="rhead"><svg style="position:absolute;left:213px;top:5px" width="9" height="6" viewBox="0 0 9 6"><path d="M4 0 V6 L0 3 Z M8.5 0 V6 L4.5 3 Z" fill="#d8d8d8"/></svg><svg style="position:absolute;left:230px;top:4px" width="8" height="8" viewBox="0 0 8 8"><path d="M1 1 L7 7 M7 1 L1 7" stroke="#e0e0e0" stroke-width="1.6"/></svg></div>
<div id="rtabs">
 <div class="rt act" style="left:0;width:43px"><span>Layers</span></div>
 <div class="rt" style="left:43px;width:40px"><span>Paths</span></div>
 <div class="rt" style="left:83px;width:58px"><span>Channels</span></div>
 <svg style="position:absolute;left:224px;top:4px" width="14" height="9" viewBox="0 0 14 9"><path d="M0 3 H5 L2.5 6 Z" fill="#ccc"/><path d="M6 1 H14 M6 3.5 H14 M6 6 H14 M6 8.5 H14" stroke="#ccc" stroke-width="1"/></svg>
</div>
<!-- kind row -->
<div class="dd" style="left:6px;top:38px;width:88px;height:19px;background:linear-gradient(#626262,#515151);border-color:#3c3c3c;color:#bdbdbd"><svg style="position:absolute;left:6px;top:3px" width="12" height="12" viewBox="0 0 12 12"><circle cx="7" cy="4.8" r="3.4" fill="none" stroke="#c4c4c4" stroke-width="1.5"/><path d="M4.5 7.5 L1.2 11" stroke="#c4c4c4" stroke-width="1.8"/></svg><span class="s" style="position:absolute;left:21px;top:1.5px">Kind</span><i class="ud" style="right:5px;top:4px;opacity:.7"></i></div>
<svg style="position:absolute;left:106px;top:41px" width="14" height="12" viewBox="0 0 14 12"><rect x=".7" y=".7" width="12.6" height="10.6" fill="none" stroke="#bbb" stroke-width="1.3"/><path d="M2 9.5 L5.5 5.5 L8 8 L9.5 6.8 L12 9.5 Z" fill="#bbb"/><circle cx="9.8" cy="3.8" r="1.2" fill="#bbb"/></svg>
<svg style="position:absolute;left:131px;top:41px" width="12" height="12" viewBox="0 0 12 12"><circle cx="6" cy="6" r="5" fill="#777" stroke="#bbb" stroke-width="1.2"/><path d="M2.5 9.5 A5 5 0 0 1 9.5 2.5 Z" fill="#c4c4c4"/></svg>
<div style="position:absolute;left:154px;top:38px;font-family:'Liberation Serif',serif;font-size:16px;color:#c4c4c4;-webkit-text-stroke:.4px #c4c4c4">T</div>
<svg style="position:absolute;left:178px;top:41px" width="13" height="13" viewBox="0 0 13 13"><rect x="2.5" y="2.5" width="8" height="8" fill="none" stroke="#bbb" stroke-width="1.2"/><g fill="#535353" stroke="#bbb" stroke-width="1"><rect x=".7" y=".7" width="3" height="3"/><rect x="9.3" y=".7" width="3" height="3"/><rect x=".7" y="9.3" width="3" height="3"/><rect x="9.3" y="9.3" width="3" height="3"/></g></svg>
<svg style="position:absolute;left:201px;top:40px" width="15" height="14" viewBox="0 0 15 14"><path d="M5.5 .7 H10.5 L13.8 4 V12 H5.5 Z" fill="#777" stroke="#bbb" stroke-width="1.1"/><path d="M10.5 .7 V4 H13.8" fill="none" stroke="#bbb"/><rect x="1" y="7" width="6.5" height="6" fill="#bbb"/></svg>
<div style="position:absolute;left:229px;top:38px;width:9px;height:18px;background:linear-gradient(#707070 0 50%,#444 50% 100%);border:1px solid #3a3a3a;border-radius:1px"></div>
<div class="hsep" style="top:60px"></div>
<!-- blend row -->
<div class="dd" style="left:6px;top:66px;width:128px;height:19px"><span class="s" style="position:absolute;left:7px;top:1.5px">Normal</span><i class="ud" style="right:4px;top:4px"></i></div>
<div class="pl s" style="left:141px;top:68px">Opacity:</div>
<div class="pf" style="left:183px;top:66px"><span class="s">100%</span></div><div class="pb" style="left:218px;top:66px"></div>
<div class="hsep" style="top:88px"></div>
<!-- lock row -->
<div class="pl s" style="left:7px;top:97px;color:#bdbdbd">Lock:</div>
<svg style="position:absolute;left:40px;top:98px" width="11" height="11" viewBox="0 0 11 11"><rect width="11" height="11" fill="#777"/><path d="M0 0H3.7V3.7H0Z M7.3 0H11V3.7H7.3Z M3.7 3.7H7.3V7.3H3.7Z M0 7.3H3.7V11H0Z M7.3 7.3H11V11H7.3Z" fill="#b5b5b5"/></svg>
<svg style="position:absolute;left:59px;top:95px" width="18" height="15" viewBox="0 0 18 15"><path d="M16 .5 L17.3 1.5 L9.3 10.3 L7.8 9 Z" fill="#bbb"/><path d="M7.3 9.6 L8.8 11 Q7 14.5 1 14 Q4.3 13 4.6 11 Q5.3 9.3 7.3 9.6 Z" fill="#bbb"/></svg>
<svg style="position:absolute;left:83px;top:96px" width="14" height="14" viewBox="0 0 14 14"><path d="M7 1.5 V12.5 M1.5 7 H12.5" stroke="#bbb" stroke-width="1.2"/><path d="M7 0 L9.2 2.8 H4.8 Z M7 14 L9.2 11.2 H4.8 Z M0 7 L2.8 4.8 V9.2 Z M14 7 L11.2 4.8 V9.2 Z" fill="#bbb"/></svg>
<svg style="position:absolute;left:107px;top:96px" width="11" height="14" viewBox="0 0 11 14"><path d="M2.8 6 V4 Q2.8 1 5.5 1 Q8.2 1 8.2 4 V6" fill="none" stroke="#bbb" stroke-width="1.6"/><rect x=".8" y="6" width="9.4" height="7.4" fill="#bbb"/><rect x="4.7" y="8" width="1.6" height="3" fill="#555"/></svg>
<div class="pl s" style="left:163px;top:96px">Fill:</div>
<div class="pf" style="left:183px;top:94px"><span class="s">100%</span></div><div class="pb" style="left:218px;top:94px"></div>
<!-- layer list -->
<div id="llist">
 <div class="lr sel" style="top:0"><div class="ec"><svg style="position:absolute;left:8px;top:8px" width="15" height="10" viewBox="0 0 15 10"><path d="M.6 5 Q7.5 -2.3 14.4 5 Q7.5 12.3 .6 5 Z" fill="#e2e2e2"/><circle cx="7.5" cy="4.8" r="3.1" fill="#4a4a4a"/><circle cx="6.6" cy="3.6" r="1.2" fill="#eee"/></svg></div>
  <div style="position:absolute;left:32px;top:1px;width:36px;height:24px;border:1px solid #fff;border-bottom:none"></div>
  <div style="position:absolute;left:44px;top:0px;width:13px;height:3px;background:#6a7f9c"></div>
  <div style="position:absolute;left:34px;top:3px;width:32px;height:21px;border:1px solid #111;background:repeating-conic-gradient(#cfcfcf 0 25%,#fff 0 50%) 0 0/6px 6px"></div>
  <svg style="position:absolute;left:46px;top:9px" width="9" height="9" viewBox="0 0 9 9"><path d="M1 5 Q1 1.5 4.5 1.5 L6.5 .5 L7.5 2.5 Q8 6 5.5 7.8 Q2 8.5 1 5 Z" fill="#000"/><circle cx="5.2" cy="4" r="1.3" fill="#fff"/></svg>
  <div class="ln s" style="left:76px">Layer 1</div></div>
 <div class="lr" style="top:25px"><div class="ec"><svg style="position:absolute;left:8px;top:8px" width="15" height="10" viewBox="0 0 15 10"><path d="M.6 5 Q7.5 -2.3 14.4 5 Q7.5 12.3 .6 5 Z" fill="#e2e2e2"/><circle cx="7.5" cy="4.8" r="3.1" fill="#4a4a4a"/><circle cx="6.6" cy="3.6" r="1.2" fill="#eee"/></svg></div>
  <div style="position:absolute;left:34px;top:3px;width:32px;height:19px;border:1px solid #1e1e1e;background:linear-gradient(90deg,#555 0 24%,#111 25%,#fff 75%,#555 76% 100%)"></div>
  <svg style="position:absolute;left:69px;top:5.5px" width="9" height="13.5" viewBox="0 0 9 16" preserveAspectRatio="none"><rect x="1.2" y="1" width="6.6" height="7.5" rx="2.4" fill="none" stroke="#e0e0e0" stroke-width="1.7"/><rect x="1.2" y="7.5" width="6.6" height="7.5" rx="2.4" fill="none" stroke="#e0e0e0" stroke-width="1.7"/><path d="M4.5 5 V11" stroke="#e0e0e0" stroke-width="1.6"/></svg>
  <div style="position:absolute;left:81px;top:3px;width:32px;height:19px;border:1px solid #1e1e1e;background:#fff"></div>
  <div class="ln s" style="left:123px">Gradient Fill 1</div></div>
 <div class="lr" style="top:50px"><div class="ec"><svg style="position:absolute;left:8px;top:8px" width="15" height="10" viewBox="0 0 15 10"><path d="M.6 5 Q7.5 -2.3 14.4 5 Q7.5 12.3 .6 5 Z" fill="#e2e2e2"/><circle cx="7.5" cy="4.8" r="3.1" fill="#4a4a4a"/><circle cx="6.6" cy="3.6" r="1.2" fill="#eee"/></svg></div>
  <div style="position:absolute;left:35px;top:3px;width:31px;height:19px;border:1px solid #2a2a2a;background:#fff"></div>
  <div class="ln s" style="left:77px;font-style:italic">Background</div>
  <svg style="position:absolute;left:200px;top:6px" width="10" height="13" viewBox="0 0 10 13"><path d="M2.6 5.5 V3.6 Q2.6 1 5 1 Q7.4 1 7.4 3.6 V5.5" fill="none" stroke="#d8d8d8" stroke-width="1.3"/><rect x="1" y="5.5" width="8" height="6.5" fill="none" stroke="#d8d8d8" stroke-width="1.4"/><rect x="4.3" y="7.5" width="1.4" height="2.5" fill="#d8d8d8"/></svg></div>
</div>
<div id="rscroll"></div>
<!-- bottom bar -->
<div id="rbot">
 <svg style="position:absolute;left:38px;top:5px" width="15" height="9" viewBox="0 0 15 9"><rect x="1" y="1.2" width="8" height="6.6" rx="3.3" fill="none" stroke="#bbb" stroke-width="1.7"/><rect x="6" y="1.2" width="8" height="6.6" rx="3.3" fill="none" stroke="#bbb" stroke-width="1.7"/></svg>
 <div style="position:absolute;left:67px;top:0px;font-family:'Liberation Serif',serif;font-style:italic;font-size:15px;color:#bbb;letter-spacing:-1px">fx</div>
 <svg style="position:absolute;left:93px;top:4px" width="14" height="11" viewBox="0 0 14 11"><rect width="14" height="11" fill="#bbb"/><circle cx="7" cy="5.5" r="2.6" fill="#555"/></svg>
 <svg style="position:absolute;left:120px;top:3px" width="13" height="13" viewBox="0 0 13 13"><circle cx="6.5" cy="6.5" r="5.3" fill="#555" stroke="#bbb" stroke-width="1.5"/><path d="M2.8 10.2 A5.3 5.3 0 0 1 10.2 2.8 Z" fill="#bbb"/></svg>
 <svg style="position:absolute;left:147px;top:4px" width="14" height="11" viewBox="0 0 14 11"><path d="M0 0 H6 L7.5 2 H13.5 V10.5 H0 Z" fill="#bbb"/></svg>
 <svg style="position:absolute;left:175px;top:4px" width="12" height="11" viewBox="0 0 12 11"><path d="M1 0 H11.5 V10.5 H5 V5 H1 Z" fill="#bbb"/><path d="M.5 5.5 H4.5 V9.5 Z" fill="#999"/></svg>
 <svg style="position:absolute;left:201px;top:3px" width="12" height="13" viewBox="0 0 12 13"><path d="M.5 3 H11.5 M4 2.5 V1 H8 V2.5" fill="none" stroke="#bbb" stroke-width="1.4"/><path d="M1.5 4.5 H10.5 L9.8 12.5 H2.2 Z" fill="#bbb"/><path d="M4 5.5 V11.5 M6 5.5 V11.5 M8 5.5 V11.5" stroke="#535353" stroke-width=".9"/></svg>
 <div style="position:absolute;left:231px;top:6px;width:10px;height:10px;background:radial-gradient(circle,#222 0 .8px,transparent 1px) 0 0/2.5px 2.5px;clip-path:polygon(100% 0,100% 100%,0 100%)"></div>
</div>
<div id="rgrip"><div style="position:absolute;left:111px;top:2px;width:20px;height:5px;background:repeating-linear-gradient(90deg,#262626 0 1px,transparent 1px 2px)"></div></div>
<div id="rfoot"><div style="position:absolute;left:227px;top:0;width:16px;height:7px;background:#5c5c5c"></div></div>
</div>
</body>
</html>
